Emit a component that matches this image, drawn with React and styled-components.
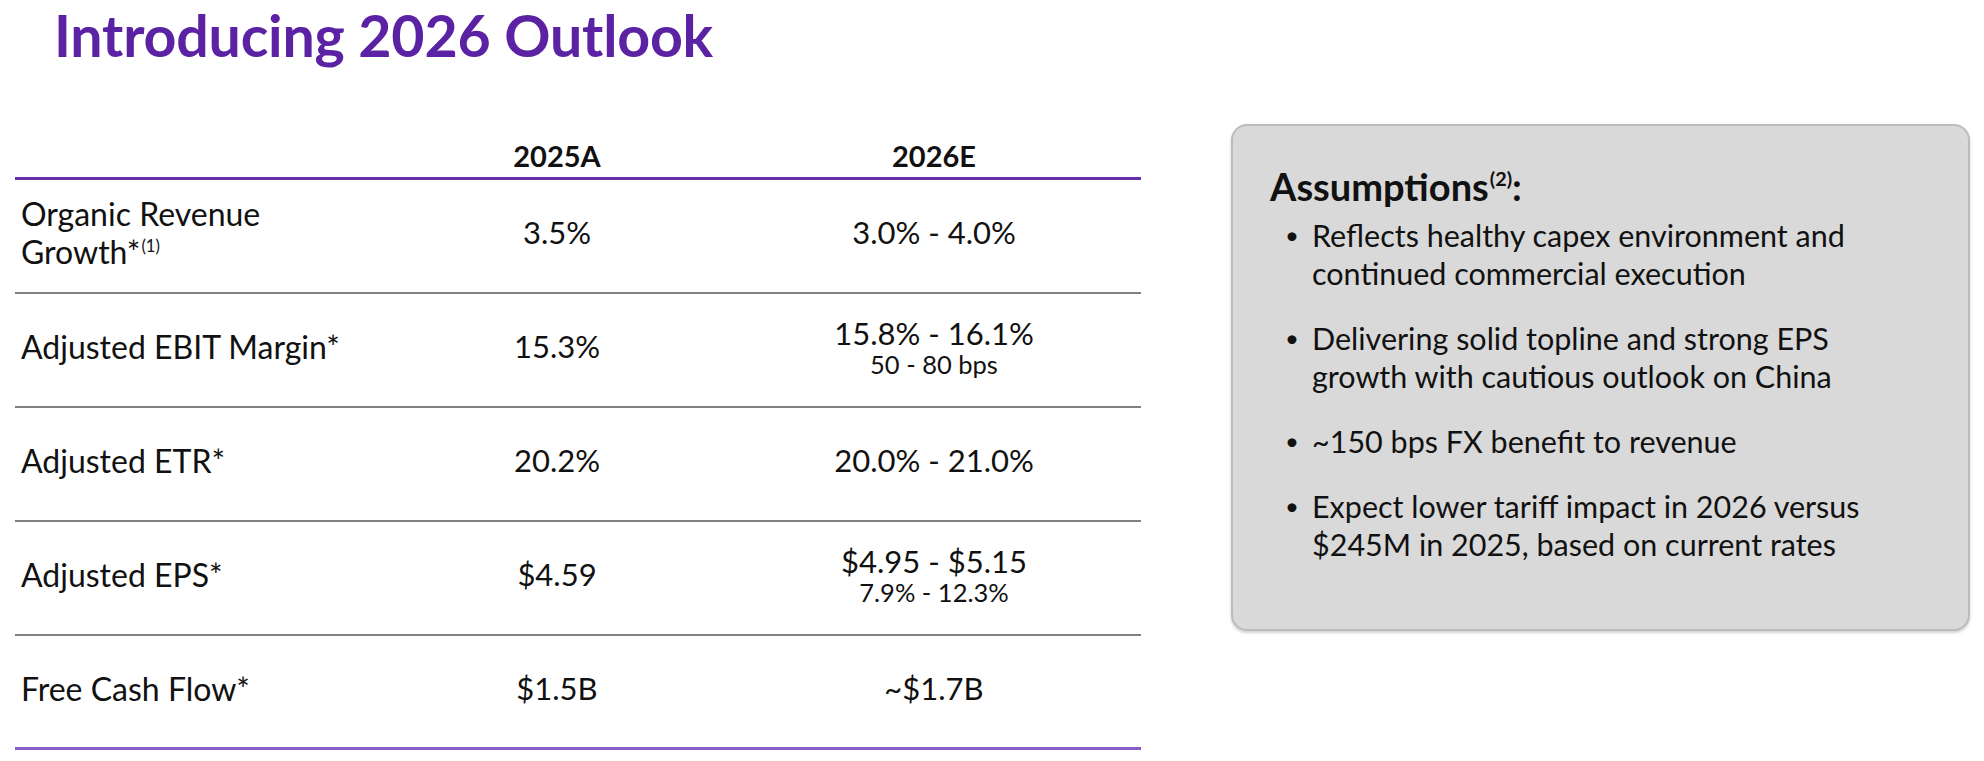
import React from 'react'
import styled, { createGlobalStyle } from 'styled-components'

const GlobalStyle = createGlobalStyle`
    html, body {
        margin: 0;
        padding: 0;
        background: #ffffff;
    }
    body {
        font-family: Lato, "Open Sans", sans-serif;
        color: #111111;
    }
`;

const Page = styled.div`
    width: 1984px;
    height: 761px;
    overflow: hidden;
    box-sizing: border-box;
    padding: 5px 14px 0 15px;
`;

const Title = styled.h1`
    margin: 0 0 0 39px;
    font-size: 57.3px;
    line-height: 60px;
    font-weight: 700;
    color: #5b22a4;
    letter-spacing: -0.2px;
`;

const Content = styled.div`
    display: flex;
    align-items: flex-start;
    gap: 90px;
    margin-top: 57px;
`;

const Table = styled.div`
    width: 1126px;
    flex-shrink: 0;
`;

const Row = styled.div`
    display: grid;
    grid-template-columns: 372px 340px 1fr;
    align-items: center;
    box-sizing: border-box;
    height: ${p => p.$head ? '58px' : '114px'};
    border-bottom: ${p => p.$border};
    font-size: 31px;
`;

const HeadCell = styled.div`
    text-align: center;
    font-weight: 700;
    font-size: 29px;
    align-self: end;
    padding-bottom: 4px;
`;

const Label = styled.div`
    padding: 0 0 6px 6px;
    font-size: 32px;
    line-height: 38px;
`;

const Value = styled.div`
    text-align: center;
    line-height: 35px;
    padding-bottom: 7px;
`;

const SubValue = styled.div`
    font-size: 25.5px;
    line-height: 27px;
`;

const Sup = styled.sup`
    font-size: 0.52em;
    vertical-align: 0.75em;
    line-height: 0;
    margin-left: 1px;
`;

const Box = styled.div`
    width: 739px;
    height: 507px;
    flex-shrink: 0;
    box-sizing: border-box;
    margin-top: 2px;
    padding: 37px 90px 0 37px;
    background: #d9d9d9;
    border: 2px solid #bcbcbc;
    border-radius: 16px;
    box-shadow: 0 2px 3px rgba(0, 0, 0, 0.18);
`;

const BoxTitle = styled.h2`
    margin: 0 0 7px 0;
    font-size: 38px;
    line-height: 46px;
    font-weight: 700;
    color: #111111;
`;

const List = styled.ul`
    list-style: none;
    margin: 0;
    padding: 0 0 0 15px;
    display: flex;
    flex-direction: column;
    gap: 27px;
`;

const Item = styled.li`
    position: relative;
    padding-left: 27px;
    font-size: 30.5px;
    line-height: 38px;

    &::before {
        content: '•';
        position: absolute;
        left: 0;
        top: 0;
        font-size: 24px;
    }
`;

const rows = [
    { label: <>Organic Revenue<br />Growth*<Sup>(1)</Sup></>, a: '3.5%', e: '3.0% - 4.0%' },
    { label: 'Adjusted EBIT Margin*', a: '15.3%', e: '15.8% - 16.1%', sub: '50 - 80 bps' },
    { label: 'Adjusted ETR*', a: '20.2%', e: '20.0% - 21.0%' },
    { label: 'Adjusted EPS*', a: '$4.59', e: '$4.95 - $5.15', sub: '7.9% - 12.3%' },
    { label: 'Free Cash Flow*', a: '$1.5B', e: '~$1.7B' },
]

const assumptions = [
    'Reflects healthy capex environment and continued commercial execution',
    'Delivering solid topline and strong EPS growth with cautious outlook on China',
    '~150 bps FX benefit to revenue',
    'Expect lower tariff impact in 2026 versus $245M in 2025, based on current rates',
]

const App = () => {
    return (
        <Page>
            <GlobalStyle />
            <Title>Introducing 2026 Outlook</Title>
            <Content>
                <Table>
                    <Row $head $border="3px solid #6630ad">
                        <div></div>
                        <HeadCell>2025A</HeadCell>
                        <HeadCell>2026E</HeadCell>
                    </Row>
                    {rows.map((r, i) => (
                        <Row key={i} $border={i === rows.length - 1 ? '3px solid #8a5cc8' : '2px solid #808080'}>
                            <Label>{r.label}</Label>
                            <Value>{r.a}</Value>
                            <Value>
                                {r.e}
                                {r.sub && <SubValue>{r.sub}</SubValue>}
                            </Value>
                        </Row>
                    ))}
                </Table>
                <Box>
                    <BoxTitle>Assumptions<Sup>(2)</Sup>:</BoxTitle>
                    <List>
                        {assumptions.map((t, i) => <Item key={i}>{t}</Item>)}
                    </List>
                </Box>
            </Content>
        </Page>
    )
}

export default App
